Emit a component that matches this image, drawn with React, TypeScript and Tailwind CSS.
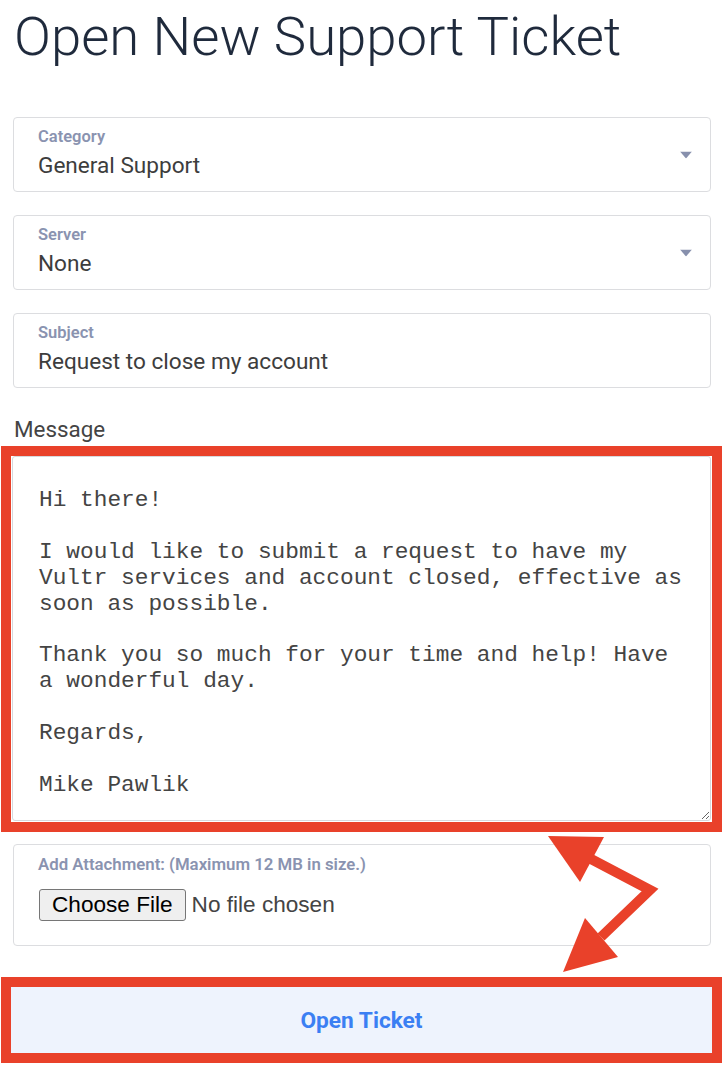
import React from "react";

const RED = "#e9412a";

function SelectField({ label, value }: { label: string; value: string }) {
  return (
    <div className="relative rounded-[4px] border border-[#dcdde0] bg-white pl-[24px] pr-[40px] pt-[9px] pb-[13px]">
      <div className="text-[16.5px] leading-[20px] font-semibold text-[#8a93b0]">{label}</div>
      <div className="mt-[7px] text-[22.6px] leading-[24px] text-[#3d3d3d]">{value}</div>
      <svg
        className="absolute right-[18px] top-1/2 -translate-y-1/2"
        width="12"
        height="7"
        viewBox="0 0 12 7"
      >
        <polygon points="0,0 12,0 6,7" fill="#8790ad" />
      </svg>
    </div>
  );
}

function TextField({ label, value }: { label: string; value: string }) {
  return (
    <div className="relative rounded-[4px] border border-[#dcdde0] bg-white pl-[24px] pr-[24px] pt-[9px] pb-[13px]">
      <div className="text-[16.5px] leading-[20px] font-semibold text-[#8a93b0]">{label}</div>
      <div className="mt-[7px] text-[22.6px] leading-[24px] text-[#3d3d3d]">{value}</div>
    </div>
  );
}

const message = `Hi there!

I would like to submit a request to have my
Vultr services and account closed, effective as
soon as possible.

Thank you so much for your time and help! Have
a wonderful day.

Regards,

Mike Pawlik`;

export default function App() {
  return (
    <div
      className="relative w-[724px] min-h-[1076px] bg-white px-[13px] pt-[3px]"
      style={{ fontFamily: "Roboto, 'Liberation Sans', sans-serif" }}
    >
      <h1 className="pl-[1px] text-[54.5px] leading-[66px] font-light text-[#1f2a3c]">
        Open New Support Ticket
      </h1>

      <div className="mt-[48px] flex flex-col gap-[23px]">
        <SelectField label="Category" value="General Support" />
        <SelectField label="Server" value="None" />
        <TextField label="Subject" value="Request to close my account" />
      </div>

      <div className="mt-[29px] pl-[1px] text-[22.4px] leading-[24px] text-[#444444]">Message</div>

      <div
        className="mt-[5px] ml-[-12px] mr-[-11px] border-[10px] px-px pt-0 pb-px"
        style={{ borderColor: RED }}
      >
        <textarea
          readOnly
          wrap="off"
          defaultValue={message}
          className="block h-[365px] w-full resize-y overflow-hidden whitespace-pre rounded-[3px] border border-[#d6d8dc] bg-white pl-[26px] pt-[31px] text-[22.8px] leading-[25.9px] text-[#444444] outline-none"
          style={{ fontFamily: "'Liberation Mono', 'Courier New', monospace" }}
        />
      </div>

      <div className="mt-[12px] rounded-[4px] border border-[#dcdde0] bg-white pl-[24px] pt-[9px] pb-[23px]">
        <div className="text-[16.8px] leading-[20px] font-semibold text-[#8a93b0]">
          Add Attachment: (Maximum 12 MB in size.)
        </div>
        <div
          className="mt-[14px] flex items-center"
          style={{ fontFamily: "'Liberation Sans', Arial, sans-serif" }}
        >
          <span className="ml-[1px] flex h-[32px] items-center rounded-[3px] border border-[#767676] bg-[#efefef] px-[12px] text-[22.6px] text-black">
            Choose File
          </span>
          <span className="ml-[6px] text-[22.6px] text-[#444444]">No file chosen</span>
        </div>
      </div>

      <div
        className="mt-[31px] ml-[-12px] mr-[-11px] border-[10px]"
        style={{ borderColor: RED }}
      >
        <div className="flex h-[66px] items-center justify-center bg-[#eef3fd] pt-[2px]">
          <span className="text-[22.7px] font-bold text-[#3b7ff3]">Open Ticket</span>
        </div>
      </div>

      <svg
        className="pointer-events-none absolute left-0 top-0"
        width="724"
        height="1076"
        viewBox="0 0 724 1076"
      >
        <polygon points="548,836 604,837 580,882" fill={RED} />
        <polyline
          points="591,859 650,890 601,937"
          fill="none"
          stroke={RED}
          strokeWidth="10"
          strokeLinejoin="miter"
        />
        <polygon points="585,918 618,957 563,972" fill={RED} />
      </svg>
    </div>
  );
}
